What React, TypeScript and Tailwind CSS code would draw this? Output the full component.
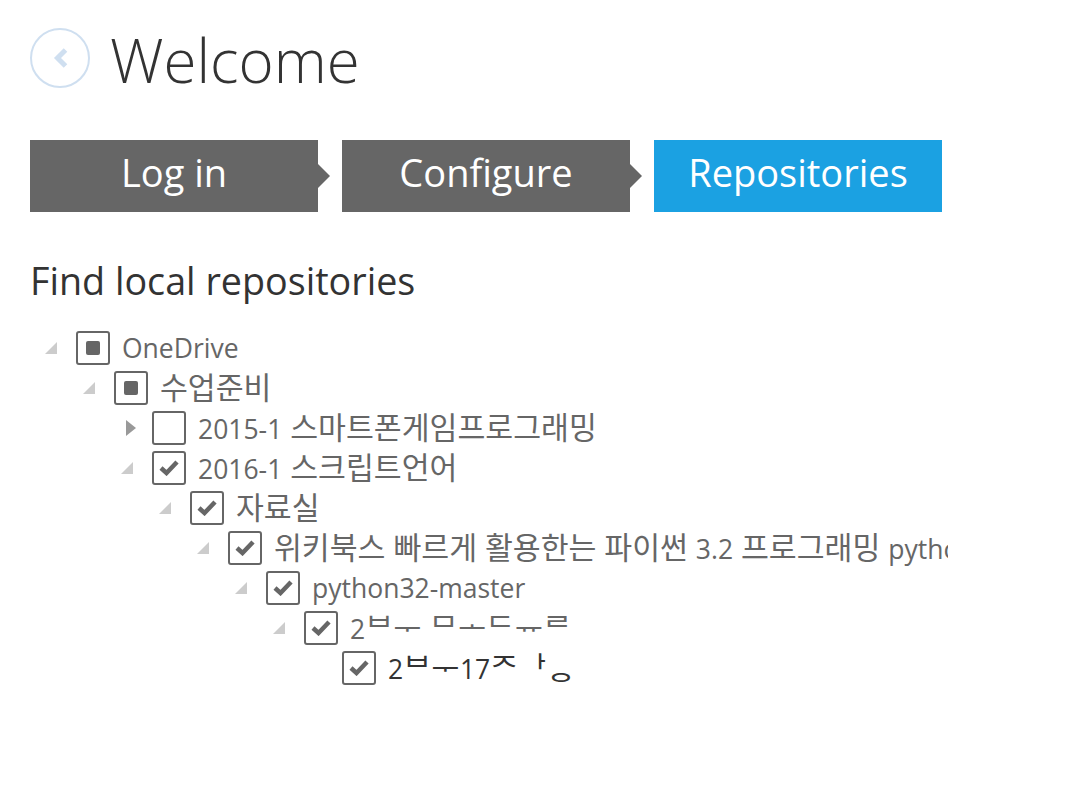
type Check = "none" | "partial" | "checked";

type Node = {
  label: string;
  check: Check;
  expander?: "open" | "closed";
  dark?: boolean;
  children?: Node[];
};

const tree: Node = {
  label: "OneDrive",
  check: "partial",
  expander: "open",
  children: [
    {
      label: "수업준비",
      check: "partial",
      expander: "open",
      children: [
        { label: "2015-1 스마트폰게임프로그래밍", check: "none", expander: "closed" },
        {
          label: "2016-1 스크립트언어",
          check: "checked",
          expander: "open",
          children: [
            {
              label: "자료실",
              check: "checked",
              expander: "open",
              children: [
                {
                  label: "위키북스 빠르게 활용한는 파이썬 3.2 프로그래밍 python32-master",
                  check: "checked",
                  expander: "open",
                  children: [
                    {
                      label: "python32-master",
                      check: "checked",
                      expander: "open",
                      children: [
                        {
                          // these two folder names are decomposed jamo in the picture
                          label: "2\u1107\u116e \u1106\u1169\u1103\u1172\u1105",
                          check: "checked",
                          expander: "open",
                          children: [
                            { label: "2\u1107\u116e17\u110c\u1161\u11bc", check: "checked", dark: true }
                          ]
                        }
                      ]
                    }
                  ]
                }
              ]
            }
          ]
        }
      ]
    }
  ]
};

// hangul is set larger than latin, the CJK fallback looks small next to Open Sans
function Label({ text }: { text: string }): React.ReactElement {
  const parts = text.split(/([\uac00-\ud7a3]+|[\u1100-\u11ff])/);
  return (
    <>
      {parts.map((part, i) => {
        if (/^[\u1100-\u11ff]$/.test(part)) {
          return (
            <span className="mr-[0.5px] inline-block text-[30.3px]" key={i}>
              {part}
            </span>
          );
        }
        if (/^[\uac00-\ud7a3]/.test(part)) {
          return (
            <span className="text-[30.3px]" key={i}>
              {part}
            </span>
          );
        }
        return <span key={i}>{part}</span>;
      })}
    </>
  );
}

function Expander({ kind }: { kind?: "open" | "closed" }): React.ReactElement {
  return (
    <div className="flex h-[34px] w-[46px] shrink-0 items-center pl-[15px]">
      {kind === "open" ? (
        <svg className="h-[12px] w-[12px]" viewBox="0 0 12 12">
          <path d="M12 0V12H0Z" fill="#cccccc" />
        </svg>
      ) : kind === "closed" ? (
        <svg className="ml-[5px] h-[16px] w-[10px]" viewBox="0 0 10 16">
          <path d="M0 0L10 8L0 16Z" fill="#999999" />
        </svg>
      ) : null}
    </div>
  );
}

function CheckBox({ state }: { state: Check }): React.ReactElement {
  return (
    <div className="flex h-[34px] w-[34px] shrink-0 items-center justify-center rounded-[3px] border-2 border-[#666666] bg-white">
      {state === "partial" ? (
        <div className="h-[14px] w-[14px] rounded-[2px] bg-[#666666]" />
      ) : state === "checked" ? (
        <svg className="h-[16px] w-[20px]" viewBox="0 0 20 16">
          <path d="M2 8L7.5 13L18 2" fill="none" stroke="#666666" strokeWidth="4.5" />
        </svg>
      ) : null}
    </div>
  );
}

function TreeRow({ node }: { node: Node }): React.ReactElement {
  return (
    <li>
      <div className="flex h-[40px] items-center whitespace-nowrap">
        <Expander kind={node.expander} />
        <CheckBox state={node.check} />
        <span
          className={`ml-[12px] text-[26.5px] leading-[34px] [word-spacing:1px] ${node.dark ? "text-[#333333]" : "text-[#666666]"}`}
        >
          <Label text={node.label} />
        </span>
      </div>
      {node.children ? (
        <ul className="ml-[38px]">
          {node.children.map((child, i) => (
            <TreeRow key={i} node={child} />
          ))}
        </ul>
      ) : null}
    </li>
  );
}

function Step({ label, active, arrow }: { label: string; active?: boolean; arrow?: boolean }): React.ReactElement {
  return (
    <div
      className={`relative flex h-[72px] w-[288px] items-center justify-center pb-[8px] text-[38px] text-white ${active ? "bg-[#1ba1e2]" : "bg-[#666666]"}`}
    >
      {label}
      {arrow ? (
        <div className="absolute left-full top-1/2 h-0 w-0 -translate-y-1/2 border-y-[12px] border-l-[12px] border-y-transparent border-l-[#666666]" />
      ) : null}
    </div>
  );
}

export default function App(): React.ReactElement {
  return (
    <div className="h-[792px] w-[1088px] overflow-hidden bg-white font-['Open_Sans','Noto_Sans_CJK_KR',sans-serif]">
      <header className="flex items-center pl-[30px] pt-[28px]">
        <button
          className="flex h-[60px] w-[60px] items-center justify-center rounded-full border-2 border-[#cfdff0]"
          type="button"
        >
          <svg className="h-[20px] w-[15px]" viewBox="0 0 15 20">
            <path d="M12.5 2L4.5 10L12.5 18" fill="none" stroke="#cfdff0" strokeWidth="5" />
          </svg>
        </button>
        <h1 className="ml-[20px] pt-[4px] text-[60px] font-light leading-[56px] text-[#333333]">Welcome</h1>
      </header>

      <nav className="ml-[30px] mt-[52px] flex gap-[24px]">
        <Step arrow label="Log in" />
        <Step arrow label="Configure" />
        <Step active label="Repositories" />
      </nav>

      <h2 className="ml-[30px] mt-[45px] text-[37.7px] leading-[48px] text-[#333333]">Find local repositories</h2>

      <ul className="mt-[23px] w-[948px] overflow-hidden pl-[30px]">
        <TreeRow node={tree} />
      </ul>
    </div>
  );
}
